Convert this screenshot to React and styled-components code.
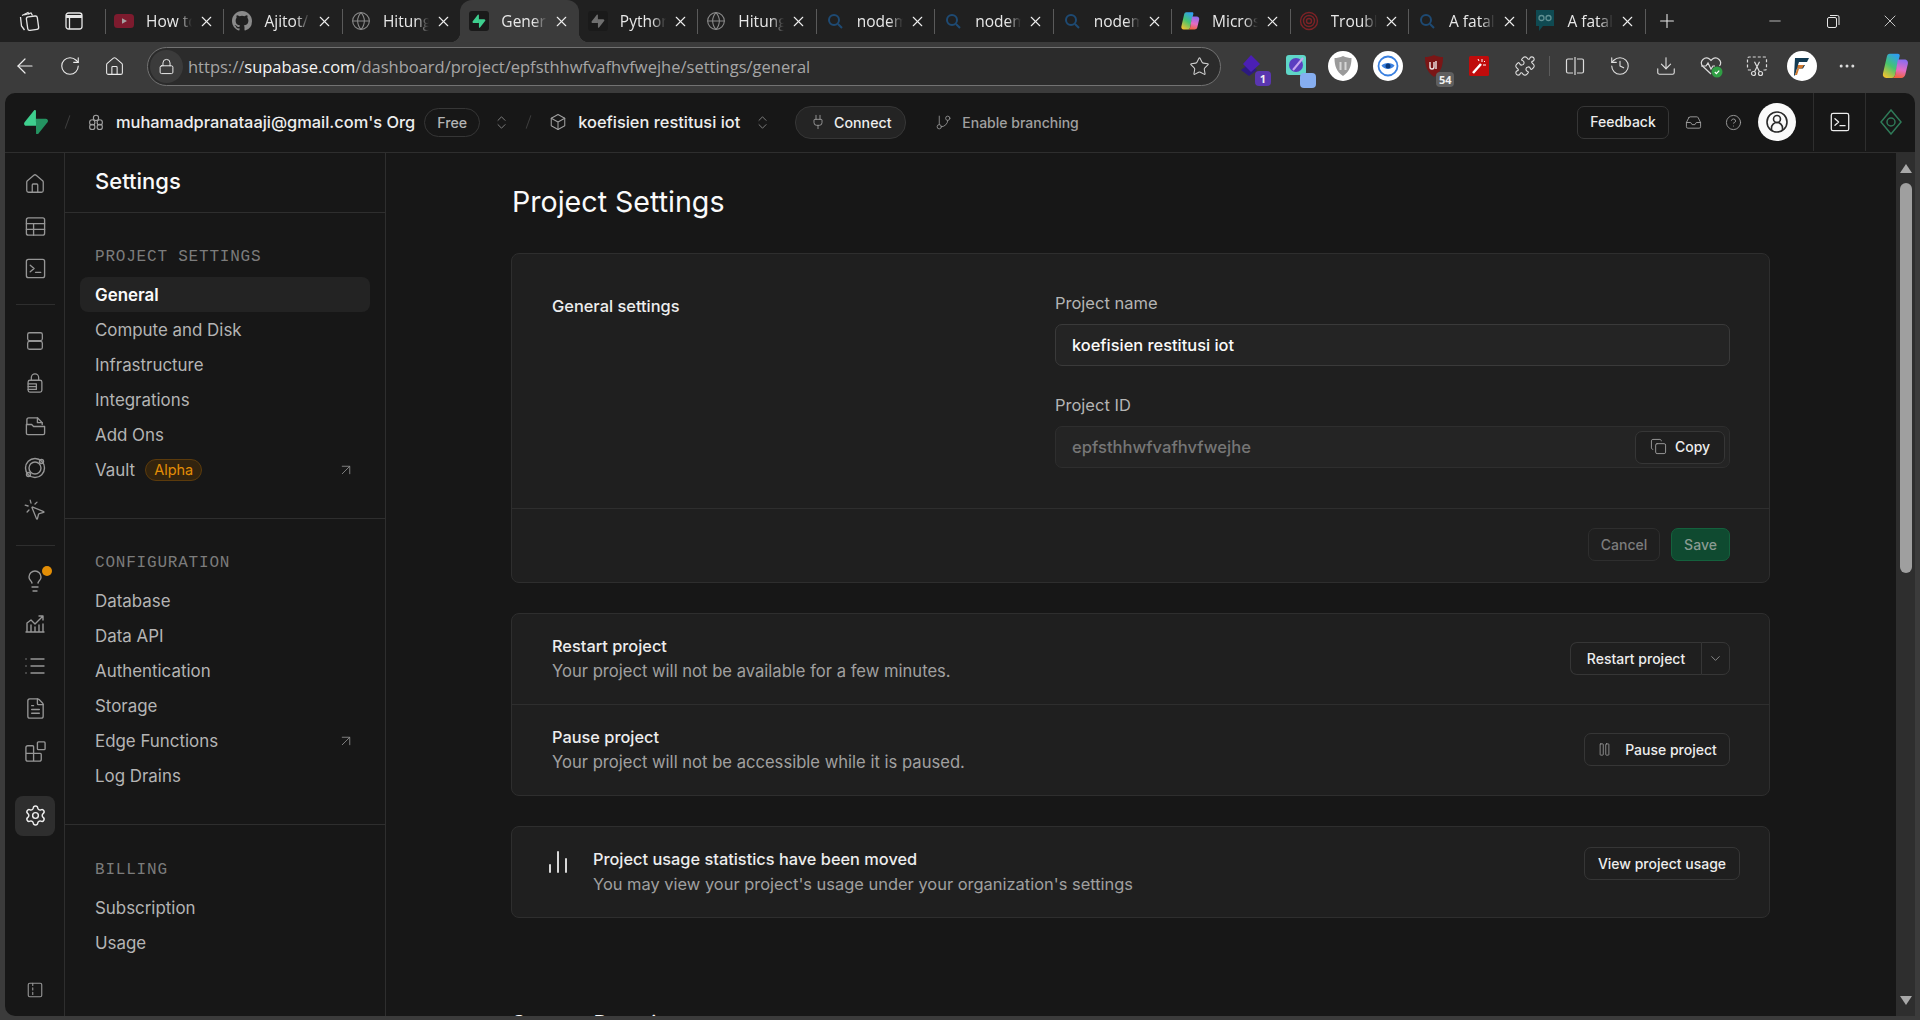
import React from "react";
import styled, { createGlobalStyle } from "styled-components";
import {
    ArrowLeft,
    ArrowUpRight,
    Blocks,
    ChevronDown,
    ChevronsUpDown,
    CircleHelp,
    Copy,
    Download,
    Ellipsis,
    FileText,
    GitBranch,
    Globe,
    History,
    House,
    Inbox,
    Lightbulb,
    List,
    Lock,
    Minus,
    MousePointerClick,
    Pause,
    Plug,
    Plus,
    Puzzle,
    RotateCw,
    Settings as Gear,
    Star,
    X,
} from "lucide-react";

const GlobalStyle = createGlobalStyle`
    html, body {
        margin: 0;
        height: 100%;
        overflow: hidden;
        background: #3b3b3b;
    }
    * {
        box-sizing: border-box;
    }
`;

const Window = styled.div`
    display: flex;
    flex-direction: column;
    width: 1920px;
    height: 1020px;
    background: #3b3b3b;
    font-family: "Inter", "Liberation Sans", sans-serif;
    color: #ededed;
    overflow: hidden;
`;

/* browser tabs */
const TabStrip = styled.div`
    display: flex;
    align-items: stretch;
    height: 42px;
    background: #202020;
    color: #e8e8e8;
    font-family: "Open Sans", "Liberation Sans", sans-serif;
`;

const StripIcon = styled.div`
    display: flex;
    align-items: center;
    justify-content: center;
    width: ${(props) => props.$width || "46px"};
    margin-left: ${(props) => props.$left || "0"};
`;

const Tab = styled.div`
    position: relative;
    display: flex;
    align-items: center;
    flex: 0 0 118.46px;
    padding-left: 9px;
    background: ${(props) => (props.$active ? "#3b3b3b" : "transparent")};
    border-radius: ${(props) => (props.$active ? "12px 12px 0 0" : "0")};

    &:before {
        content: "";
        display: ${(props) => (props.$noSep ? "none" : "block")};
        position: absolute;
        left: 0;
        top: 9px;
        bottom: 8px;
        width: 1px;
        background: #5a5a5a;
    }
`;

const NewTab = styled(Tab)`
    flex-basis: 44px;
    padding-left: 11px;
`;

const TabFlare = styled.span`
    position: absolute;
    bottom: 0;
    width: 10px;
    height: 10px;
    ${(props) => (props.$side === "left" ? "left: -10px;" : "right: -10px;")}
    background: radial-gradient(
        circle at ${(props) => (props.$side === "left" ? "0 0" : "100% 0")},
        transparent 10px,
        #3b3b3b 10.5px
    );
`;

const TabIcon = styled.div`
    display: flex;
    align-items: center;
    justify-content: center;
    flex: 0 0 20px;
    height: 20px;
`;

const TabTitle = styled.span`
    width: 46px;
    margin-left: 12px;
    font-size: 15.5px;
    white-space: nowrap;
    overflow: hidden;
    -webkit-mask-image: linear-gradient(90deg, #000 70%, transparent 100%);
    mask-image: linear-gradient(90deg, #000 70%, transparent 100%);
`;

const TabClose = styled.div`
    display: flex;
    margin-left: 6px;
`;

const WindowControls = styled.div`
    display: flex;
    align-items: center;
    margin-left: auto;
    padding-right: 1px;
`;

const WindowButton = styled.div`
    display: flex;
    align-items: center;
    justify-content: center;
    width: 57.5px;
`;

/* browser toolbar */
const Toolbar = styled.div`
    display: flex;
    align-items: center;
    height: 51px;
    padding-left: 2px;
    padding-bottom: 3px;
`;

const NavButton = styled.div`
    display: flex;
    align-items: center;
    justify-content: center;
    flex: 0 0 45px;
`;

const AddressBar = styled.div`
    display: flex;
    align-items: center;
    flex: 1;
    height: 39px;
    margin-left: 10px;
    margin-right: 9px;
    padding-right: 10px;
    background: #2b2b2b;
    border: 1px solid #727272;
    border-radius: 20px;
`;

const LockBadge = styled.div`
    display: flex;
    align-items: center;
    justify-content: center;
    flex: 0 0 33px;
    height: 33px;
    margin-left: 2px;
    background: #3b3b3b;
    border-radius: 50%;
`;

const Url = styled.div`
    flex: 1;
    margin-left: 5px;
    font-family: "Open Sans", "Liberation Sans", sans-serif;
    font-size: 16.5px;
    color: #a6a6a6;
    white-space: nowrap;
    b {
        font-weight: 400;
        color: #f4f4f4;
    }
`;

const ExtSlot = styled.div`
    position: relative;
    display: flex;
    align-items: center;
    justify-content: center;
    flex: 0 0 ${(props) => props.$width || "45.4px"};
`;

const ExtBadge = styled.span`
    position: absolute;
    right: ${(props) => props.$right || "6px"};
    bottom: -9px;
    min-width: 16px;
    height: 15px;
    padding: 0 3px;
    border-radius: 4px;
    background: ${(props) => props.$color};
    color: #f0f0f0;
    font-family: "Open Sans", sans-serif;
    font-size: 11px;
    font-weight: 700;
    line-height: 15px;
    text-align: center;
`;

const ToolbarSep = styled.div`
    flex: 0 0 1px;
    height: 20px;
    margin: 0 2px;
    background: #5c5c5c;
`;

/* supabase app */
const Shell = styled.div`
    display: flex;
    flex-direction: column;
    flex: 1;
    min-height: 0;
    margin: 0 5px 4px 5px;
    background: #171717;
    border-radius: 10px 10px 0 10px;
    overflow: hidden;
`;

const AppHeader = styled.header`
    display: flex;
    align-items: center;
    flex: 0 0 60px;
    padding-bottom: 1px;
    border-bottom: 1px solid #2e2e2e;
    font-size: 16.4px;
`;

const Slash = styled.span`
    width: 1px;
    height: 14px;
    margin-left: ${(props) => props.$left};
    background: #3e3e3e;
    transform: rotate(20deg);
`;

const HeaderIcon = styled.div`
    display: flex;
    align-items: center;
    margin-left: ${(props) => props.$left || "0"};
`;

const Crumb = styled.span`
    margin-left: ${(props) => props.$left || "0"};
    font-weight: 500;
    color: #ededed;
    white-space: nowrap;
`;

const Pill = styled.span`
    display: inline-flex;
    align-items: center;
    justify-content: center;
    gap: ${(props) => props.$gap || "0"};
    width: ${(props) => props.$width};
    height: ${(props) => props.$height || "29px"};
    margin-left: ${(props) => props.$left};
    border: 1px solid #363636;
    border-radius: 16px;
    background: ${(props) => props.$bg || "transparent"};
    color: ${(props) => props.$color || "#b4b4b4"};
    font-size: 14.2px;
    font-weight: 500;
`;

const Muted = styled.span`
    margin-left: 10px;
    color: #a0a0a0;
    font-size: 14px;
    font-weight: 500;
`;

const HeaderRight = styled.div`
    display: flex;
    align-items: center;
    height: 100%;
    margin-left: auto;
`;

const Button = styled.button`
    display: inline-flex;
    align-items: center;
    justify-content: center;
    gap: ${(props) => props.$gap || "0"};
    width: ${(props) => props.$width};
    height: 33px;
    padding: 0 0 1px;
    background: ${(props) => props.$bg || "#1f1f1f"};
    border: 1px solid ${(props) => props.$border || "#363636"};
    border-radius: 7px;
    color: ${(props) => props.$color || "#ededed"};
    font-family: inherit;
    font-size: 14px;
    font-weight: 500;
    white-space: nowrap;
`;

const Avatar = styled.div`
    display: flex;
    align-items: center;
    justify-content: center;
    width: 38px;
    height: 38px;
    margin-left: 16px;
    border-radius: 50%;
    background: #fafafa;
`;

const HeaderCell = styled.div`
    display: flex;
    align-items: center;
    justify-content: center;
    width: ${(props) => props.$width};
    height: 100%;
    margin-left: ${(props) => props.$left || "0"};
    border-left: 1px solid #2e2e2e;
`;

const Body = styled.div`
    display: flex;
    flex: 1;
    min-height: 0;
`;

const Rail = styled.nav`
    display: flex;
    flex-direction: column;
    align-items: center;
    flex: 0 0 60px;
    padding: 10px 0 5px 1px;
    border-right: 1px solid #2e2e2e;
`;

const RailItem = styled.div`
    position: relative;
    display: flex;
    align-items: center;
    justify-content: center;
    flex: 0 0 ${(props) => props.$height || "42.3px"};
`;

const RailActive = styled.div`
    display: flex;
    align-items: center;
    justify-content: center;
    width: 40px;
    height: 40px;
    margin-top: 23px;
    border-radius: 8px;
    background: #2e2e2e;
`;

const RailDivider = styled.div`
    flex: 0 0 1px;
    width: 39px;
    margin: ${(props) => props.$margin};
    background: #2e2e2e;
`;

const Dot = styled.span`
    position: absolute;
    top: 7px;
    left: 19px;
    width: 10px;
    height: 10px;
    border-radius: 50%;
    background: #e38e06;
`;

const RailFoot = styled.div`
    display: flex;
    align-items: center;
    justify-content: center;
    margin-top: auto;
    height: 42px;
`;

const Panel = styled.aside`
    flex: 0 0 321px;
    border-right: 1px solid #2e2e2e;
`;

const PanelTitle = styled.div`
    display: flex;
    align-items: center;
    height: 60px;
    padding-left: 30px;
    padding-bottom: 3px;
    border-bottom: 1px solid #2e2e2e;
    font-size: 22px;
    font-weight: 500;
    color: #fafafa;
`;

const PanelSection = styled.section`
    padding: ${(props) => (props.$last ? "33px" : "32px")} 15px 31px;
    border-bottom: ${(props) => (props.$last ? "none" : "1px solid #2e2e2e")};
`;

const SectionLabel = styled.div`
    height: 24px;
    margin-bottom: 8px;
    padding-left: 15px;
    font-family: "Liberation Mono", "DejaVu Sans Mono", monospace;
    font-size: 16px;
    letter-spacing: 0.8px;
    line-height: 24px;
    color: #7c7c7c;
`;

const PanelItem = styled.div`
    display: flex;
    align-items: center;
    height: 35px;
    padding: 0 15px;
    border-radius: 8px;
    background: ${(props) => (props.$active ? "#232323" : "transparent")};
    color: ${(props) => (props.$active ? "#fafafa" : "#b4b4b4")};
    font-size: 16.9px;
    font-weight: ${(props) => (props.$active ? 600 : 400)};
`;

const AlphaTag = styled.span`
    display: inline-block;
    height: 22px;
    margin-left: 10px;
    padding: 0 8px;
    border: 1px solid #5c3b0c;
    border-radius: 11px;
    background: #33240e;
    color: #e38e06;
    font-size: 14.5px;
    line-height: 20px;
`;

const External = styled.span`
    display: flex;
    margin-left: auto;
    color: #8a8a8a;
`;

const Main = styled.main`
    flex: 1;
    min-width: 0;
    height: 863px;
    overflow: hidden;
    padding: 29px 0 0 125px;
`;

const PageTitle = styled.h1`
    height: 40px;
    margin: 0 0 31px 1px;
    font-size: 28.6px;
    font-weight: 400;
    line-height: 40px;
    color: #fafafa;
`;

const Card = styled.div`
    width: 1259px;
    margin-bottom: ${(props) => props.$bottom || "30px"};
    background: #1f1f1f;
    border: 1px solid #2e2e2e;
    border-radius: 8px;
`;

const FormGrid = styled.div`
    display: grid;
    grid-template-columns: 503px 675px;
    padding: 37px 40px 40px;
    border-bottom: 1px solid #2e2e2e;
`;

const CardHeading = styled.div`
    margin-top: 3px;
    font-size: 16.4px;
    line-height: 24px;
    font-weight: 500;
    color: #ededed;
`;

const FieldLabel = styled.label`
    display: block;
    height: 24px;
    margin-top: ${(props) => props.$top || "0"};
    margin-bottom: 9px;
    color: #b4b4b4;
    font-size: 16.5px;
    line-height: 24px;
`;

const Field = styled.div`
    display: flex;
    align-items: center;
    height: 42px;
    padding: 0 4px 0 16px;
    background: #242424;
    border: 1px solid ${(props) => (props.$readOnly ? "#2e2e2e" : "#3a3a3a")};
    border-radius: 7px;
    color: ${(props) => (props.$readOnly ? "#767676" : "#fafafa")};
    font-size: ${(props) => (props.$readOnly ? "16.6px" : "16.4px")};
    font-weight: 500;
`;

const FieldValue = styled.span`
    flex: 1;
    margin-bottom: 1px;
`;

const CardFooter = styled.div`
    display: flex;
    justify-content: flex-end;
    gap: 11px;
    padding: 19px 39px 21px;
`;

const Row = styled.div`
    display: flex;
    align-items: center;
    justify-content: space-between;
    height: ${(props) => props.$height || "91px"};
    padding: 0 39px 0 40px;
    border-bottom: ${(props) => (props.$last ? "none" : "1px solid #2e2e2e")};
`;

const RowTitle = styled.div`
    font-size: 16.35px;
    line-height: 25px;
    font-weight: 500;
    color: #ededed;
`;

const RowDesc = styled.div`
    font-size: 16.6px;
    line-height: 25px;
    color: #a0a0a0;
`;

const NoticeDesc = styled(RowDesc)`
    font-size: 16.45px;
`;

const RowAction = styled.div`
    display: flex;
    margin-bottom: 1px;
`;

const SplitMain = styled(Button)`
    border-radius: 7px 0 0 7px;
    border-right: none;
`;

const SplitArrow = styled(Button)`
    border-radius: 0 7px 7px 0;
`;

const NoticeRow = styled.div`
    display: flex;
    align-items: flex-start;
    padding: 20px 29px 20px 36px;
    height: 90px;
`;

const NoticeIcon = styled.div`
    display: flex;
    flex: 0 0 45px;
    margin-top: 4px;
`;

const NoticeText = styled.div`
    flex: 1;
`;

const NextHeading = styled.h2`
    margin: 93px 0 0;
    font-size: 21px;
    font-weight: 400;
    color: #fafafa;
`;

const ScrollTrack = styled.div`
    display: flex;
    flex-direction: column;
    align-items: center;
    flex: 0 0 19px;
    height: 863px;
    background: #2e2e2e;
`;

const ScrollUp = styled.div`
    width: 0;
    height: 0;
    margin-top: 11px;
    border-left: 6px solid transparent;
    border-right: 6px solid transparent;
    border-bottom: 9px solid #a8a8a8;
`;

const ScrollThumb = styled.div`
    width: 12px;
    height: 390px;
    margin-top: 10px;
    border-radius: 6px;
    background: #9f9f9f;
`;

const ScrollDown = styled.div`
    width: 0;
    height: 0;
    margin-top: auto;
    margin-bottom: 11px;
    border-left: 6px solid transparent;
    border-right: 6px solid transparent;
    border-top: 9px solid #a8a8a8;
`;

const Bolt = ({ size = 24, color }) => (
    <svg width={size} height={size * 1.03} viewBox="0 0 109 113" fill="none">
        <path
            d="M63.7 110.3c-2.9 3.6-8.7 1.6-8.8-3L54 40.2h45.3c8.2 0 12.8 9.5 7.7 15.9L63.7 110.3z"
            fill={color || "#249361"}
        />
        <path
            d="M45.3 2.1c2.9-3.6 8.7-1.6 8.8 3l.4 67.1H9.8c-8.2 0-12.8-9.5-7.7-15.9L45.3 2.1z"
            fill={color || "#3ecf8e"}
        />
    </svg>
);

const TabBolt = ({ color }) => (
    <svg width="20" height="20" viewBox="0 0 20 20">
        <rect width="20" height="20" rx="3" fill="#1a1a1a" />
        <g transform="translate(3.5 3.5) scale(0.118)">
            <path d="M63.7 110.3c-2.9 3.6-8.7 1.6-8.8-3L54 40.2h45.3c8.2 0 12.8 9.5 7.7 15.9L63.7 110.3z" fill={color} />
            <path d="M45.3 2.1c2.9-3.6 8.7-1.6 8.8 3l.4 67.1H9.8c-8.2 0-12.8-9.5-7.7-15.9L45.3 2.1z" fill={color} />
        </g>
    </svg>
);

const YouTubeFav = () => (
    <svg width="20" height="14" viewBox="0 0 20 14">
        <rect width="20" height="14" rx="3.5" fill="#7d1b2e" />
        <path d="M8 4.3 13 7l-5 2.7z" fill="#a6a0a0" />
    </svg>
);

const GithubFav = () => (
    <svg width="20" height="20" viewBox="0 0 16 16" fill="#8a8a8a">
        <path d="M8 0C3.58 0 0 3.58 0 8c0 3.54 2.29 6.53 5.47 7.59.4.07.55-.17.55-.38v-1.34c-2.23.48-2.7-1.07-2.7-1.07-.36-.92-.89-1.17-.89-1.17-.73-.5.05-.49.05-.49.8.06 1.23.83 1.23.83.71 1.22 1.87.87 2.33.66.07-.52.28-.87.5-1.07-1.77-.2-3.64-.89-3.64-3.95 0-.87.31-1.59.82-2.15-.08-.2-.36-1.02.08-2.12 0 0 .67-.21 2.2.82a7.6 7.6 0 0 1 4 0c1.53-1.04 2.2-.82 2.2-.82.44 1.1.16 1.92.08 2.12.51.56.82 1.27.82 2.15 0 3.07-1.87 3.75-3.65 3.95.29.25.54.73.54 1.48v2.2c0 .21.15.46.55.38A8 8 0 0 0 16 8c0-4.42-3.58-8-8-8z" />
    </svg>
);

const SearchFav = () => (
    <svg width="18" height="18" viewBox="0 0 18 18" fill="none" stroke="#1e4a73" strokeWidth="2">
        <circle cx="8" cy="8" r="5" />
        <path d="m12 12 4 4" />
    </svg>
);

const CopilotFav = ({ size = 20, id = "cp" }) => (
    <svg width={size} height={size} viewBox="0 0 24 24">
        <defs>
            <linearGradient id={`${id}A`} x1="0.7" y1="0" x2="0.2" y2="1">
                <stop offset="0" stopColor="#2f9ff0" />
                <stop offset="0.5" stopColor="#46c46e" />
                <stop offset="1" stopColor="#f2c230" />
            </linearGradient>
            <linearGradient id={`${id}B`} x1="0.6" y1="0" x2="0.4" y2="1">
                <stop offset="0" stopColor="#8a6cf0" />
                <stop offset="0.55" stopColor="#e46cc4" />
                <stop offset="1" stopColor="#f0643c" />
            </linearGradient>
        </defs>
        <path d="M7.5 1.5h7c1.2 0 1.8.8 1.5 2L12 20c-.4 1.4-1.2 2.2-2.5 2.2H4.5c-2.2 0-3.3-1.8-2.8-3.8L5 4c.3-1.5 1.2-2.5 2.5-2.5z" fill={`url(#${id}A)`} />
        <path d="M14.5 6.5H20c2.2 0 3.6 1.7 3 3.8l-2.2 9.2c-.5 1.7-1.7 2.7-3.3 2.7h-8c1.3 0 2.2-.9 2.6-2.2z" fill={`url(#${id}B)`} />
    </svg>
);

const FingerprintFav = () => (
    <svg width="20" height="20" viewBox="0 0 20 20" fill="none" stroke="#7c2226" strokeWidth="1.4">
        <circle cx="10" cy="10" r="8.5" />
        <circle cx="10" cy="10" r="5.5" />
        <circle cx="10" cy="10" r="2.5" />
    </svg>
);

const CollabFav = () => (
    <svg width="20" height="22" viewBox="0 0 20 22">
        <path d="M1 0h18v16H8l-4 5v-5H1z" fill="#0f4a52" />
        <path d="M4 8a2.5 2.5 0 0 1 5 0 2.5 2.5 0 0 1-5 0m7 0a2.5 2.5 0 0 1 5 0 2.5 2.5 0 0 1-5 0" fill="none" stroke="#5f8f92" strokeWidth="1.3" />
    </svg>
);

const TabsIcon = () => (
    <svg width="22" height="22" viewBox="0 0 22 22" fill="none" stroke="#e6e6e6" strokeWidth="1.3">
        <path d="M3 5.5 9 2.5l1.2 2M1.5 7l1 9 3 4" />
        <path d="M5.2 5 12 3l1.5 2.5" />
        <rect x="8" y="6.5" width="11" height="13.5" rx="2" transform="rotate(-8 13 13)" />
    </svg>
);

const VerticalTabsIcon = () => (
    <svg width="18" height="18" viewBox="0 0 18 18" fill="none" stroke="#e6e6e6" strokeWidth="1.3">
        <rect x="1" y="1" width="16" height="16" rx="2.5" />
        <path d="M1 4.5h16" strokeWidth="3" />
        <path d="M4.5 5v12" />
    </svg>
);

const RestoreIcon = () => (
    <svg width="14" height="14" viewBox="0 0 14 14" fill="none" stroke="#e6e6e6" strokeWidth="1">
        <rect x="1.5" y="3.5" width="9" height="10" rx="1.5" />
        <path d="M4 1.5h7.5a1.5 1.5 0 0 1 1.5 1.5v8" />
    </svg>
);

const SplitIcon = () => (
    <svg width="20" height="20" viewBox="0 0 20 20" fill="none" stroke="#dcdcdc" strokeWidth="1.2">
        <path d="M8 3H3a1.5 1.5 0 0 0-1.5 1.5v11A1.5 1.5 0 0 0 3 17h5M12 3h5a1.5 1.5 0 0 1 1.5 1.5v11A1.5 1.5 0 0 1 17 17h-5M10 1v18" />
    </svg>
);

const HeartCheck = () => (
    <svg width="24" height="24" viewBox="0 0 24 24">
        <path d="M12 20 3.5 12a5 5 0 0 1 7-7L12 6.5 13.5 5a5 5 0 0 1 7 7" fill="none" stroke="#dcdcdc" strokeWidth="1.2" />
        <path d="M2 12h5l2-3 3 6 2-3h2" fill="none" stroke="#dcdcdc" strokeWidth="1.2" />
        <circle cx="18" cy="18" r="5.5" fill="#2f9e44" />
        <path d="m15.8 18 1.6 1.6 2.8-3" fill="none" stroke="#fff" strokeWidth="1.2" />
    </svg>
);

const Scissors = () => (
    <svg width="22" height="22" viewBox="0 0 22 22" fill="none" stroke="#dcdcdc" strokeWidth="1.2">
        <path d="M5 15H3a1.5 1.5 0 0 1-1.5-1.5v-10A1.5 1.5 0 0 1 3 2h16a1.5 1.5 0 0 1 1.5 1.5v10A1.5 1.5 0 0 1 19 15h-2" strokeDasharray="3 2" />
        <circle cx="7.5" cy="18.5" r="2" />
        <circle cx="14.5" cy="18.5" r="2" />
        <path d="m8.5 16.8 5-10M13.5 16.8l-5-10" />
    </svg>
);

const StackExt = () => (
    <svg width="22" height="22" viewBox="0 0 22 22">
        <path d="M0 15 8 9l8 6-8 6z" fill="#2c1a80" />
        <path d="M2 9 10 0l9 9-9 8z" fill="#4b1fb4" />
    </svg>
);

const PaletteExt = () => (
    <svg width="26" height="26" viewBox="0 0 26 26">
        <rect x="1" y="2" width="20" height="20" rx="3" fill="#5fd6c8" />
        <circle cx="11" cy="12" r="7" fill="#5a3fc0" />
        <path d="m8 17 10-12" stroke="#c8a6f0" strokeWidth="2" />
    </svg>
);

const PauseShield = () => (
    <svg width="30" height="30" viewBox="0 0 30 30">
        <circle cx="15" cy="15" r="15" fill="#fff" />
        <path d="M15 5c3 1.5 6 2 8.5 2 0 8-2 13.5-8.5 18C8.5 20.5 6.5 15 6.5 7 9 7 12 6.5 15 5z" fill="#9a9a9a" />
        <path d="M12.5 11v8M17.5 11v8" stroke="#d6d6d6" strokeWidth="2" />
    </svg>
);

const EyeExt = () => (
    <svg width="30" height="30" viewBox="0 0 30 30">
        <circle cx="15" cy="15" r="15" fill="#fff" />
        <circle cx="15" cy="15" r="9.5" fill="#fff" stroke="#3a80e0" strokeWidth="1.8" />
        <path d="M8.5 14.5C11 11 19 11 21.5 14.5 19 19 11 19 8.5 14.5z" fill="#3a80e0" />
        <circle cx="15" cy="15" r="2.5" fill="#0c3a7c" />
    </svg>
);

const UblockExt = () => (
    <svg width="22" height="24" viewBox="0 0 22 24">
        <path d="M11 1c3 1.5 6 2 9 2 0 9-2 15-9 20C4 18 2 12 2 3c3 0 6-.5 9-2z" fill="#7a1616" />
        <path d="M7 8v5a2 2 0 0 0 4 0V8M13 7v8" fill="none" stroke="#efe6e6" strokeWidth="1.4" />
    </svg>
);

const WandExt = () => (
    <svg width="20" height="20" viewBox="0 0 20 20">
        <rect width="20" height="20" rx="1.5" fill="#c00b0b" />
        <path d="m4 17 8-9" stroke="#fff" strokeWidth="2.5" />
        <path d="M13 3v3M16 5l-1 1M17 9h-3M9 3l1 2" stroke="#fff" strokeWidth="1" />
    </svg>
);

const FExt = () => (
    <svg width="30" height="30" viewBox="0 0 30 30">
        <circle cx="15" cy="15" r="15" fill="#fff" />
        <path d="M8 7h14l-2 4h-8l-1 3h7l-2 3.5h-6l-2 7H7z" fill="#123a52" />
        <path d="M11 14h6l-2 3.5h-5zM8 24l2-6h2l-2 6z" fill="#d0782e" />
    </svg>
);

const Ico = ({ children, size = 22, color = "#969696", width = 1.4, viewBox = "0 0 24 24" }) => (
    <svg width={size} height={size} viewBox={viewBox} fill="none" stroke={color} strokeWidth={width} strokeLinecap="round" strokeLinejoin="round">
        {children}
    </svg>
);

const TableIcon = () => (
    <Ico size={23}>
        <rect x="2.5" y="3" width="19" height="18" rx="2" />
        <path d="M2.5 9h19M2.5 15h19M10 9v12" />
    </Ico>
);

const TerminalIcon = ({ color, size = 23 }) => (
    <Ico size={size} color={color}>
        <rect x="2.5" y="2.5" width="19" height="19" rx="2" />
        <path d="m6.5 8.5 4 3.5-4 3.5M12 16h5.5" />
    </Ico>
);

const DbIcon = () => (
    <Ico>
        <rect x="4" y="3" width="16" height="8.5" rx="2" />
        <rect x="4" y="12.5" width="16" height="8.5" rx="2" />
    </Ico>
);

const AuthIcon = () => (
    <Ico>
        <path d="M8 9V6a4 4 0 0 1 8 0v3" />
        <rect x="4.5" y="9" width="15" height="13" rx="2" />
        <path d="M4.5 13h9M4.5 16h9M4.5 19h9M13.5 13v6" />
    </Ico>
);

const FolderIcon = () => (
    <Ico size={23}>
        <path d="M3 11V6a2 2 0 0 1 2-2h9l5 5v2" />
        <path d="M14 4v5h5" />
        <path d="M2.5 11H8l2 2h11.5v7a1.5 1.5 0 0 1-1.5 1.5H4A1.5 1.5 0 0 1 2.5 20z" />
    </Ico>
);

const RealtimeIcon = () => (
    <Ico size={24}>
        <circle cx="12" cy="12" r="9.5" />
        <circle cx="12" cy="12" r="6" />
        <circle cx="18.5" cy="5.5" r="2" />
        <circle cx="5.5" cy="18.5" r="2" />
    </Ico>
);

const ReportsIcon = () => (
    <Ico size={24}>
        <path d="M3 21h18M4 21v-9l4-3 4 4 8-8M20 5h-4M20 5v4M8 21v-7M12 21v-5M16 21v-7M20 21v-8" />
    </Ico>
);

const CollapseIcon = () => (
    <Ico size={18} width={1.5}>
        <rect x="3" y="3" width="18" height="18" rx="2" />
        <path d="M9 3v18" strokeDasharray="3 3" />
    </Ico>
);

const OrgIcon = () => (
    <Ico size={18} color="#a0a0a0" width={1.5}>
        <circle cx="12" cy="6.5" r="3.5" />
        <circle cx="7" cy="12.5" r="3.5" />
        <circle cx="17" cy="12.5" r="3.5" />
        <circle cx="7" cy="18.5" r="3.5" />
        <circle cx="17" cy="18.5" r="3.5" />
    </Ico>
);

const BoxIcon = () => (
    <Ico size={18} color="#a0a0a0">
        <path d="M12 2 3 7v10l9 5 9-5V7z" />
        <path d="m3 7 9 5 9-5M12 12v10" />
    </Ico>
);

const AvatarIcon = () => (
    <svg width="24" height="24" viewBox="0 0 24 24" fill="none" stroke="#2a2a2a" strokeWidth="1.6">
        <circle cx="12" cy="12" r="10" />
        <circle cx="12" cy="9" r="3.5" />
        <path d="M6.5 20v-2a5.5 5.5 0 0 1 11 0v2" />
    </svg>
);

const DiamondIcon = () => (
    <svg width="22" height="26" viewBox="0 0 22 26" fill="none" stroke="#2f7a58" strokeWidth="1.5">
        <path d="M11 1 21 13 11 25 1 13z" />
        <circle cx="11" cy="13" r="4" />
    </svg>
);

const BarsIcon = () => (
    <svg width="20" height="22" viewBox="0 0 20 22" stroke="#d8d8d8" strokeWidth="2" strokeLinecap="round">
        <path d="M2 14v7M10 1v20M18 8v13" />
    </svg>
);

const tabs = [
    { title: "How to", icon: <YouTubeFav /> },
    { title: "Ajitot/", icon: <GithubFav /> },
    { title: "Hitung", icon: <Globe size={20} color="#8a8a8a" strokeWidth={1.3} /> },
    { title: "General", icon: <TabBolt color="#3ecf8e" />, active: true, noSep: true },
    { title: "Python", icon: <TabBolt color="#6f6f6f" />, noSep: true },
    { title: "Hitung", icon: <Globe size={20} color="#8a8a8a" strokeWidth={1.3} /> },
    { title: "nodem", icon: <SearchFav /> },
    { title: "nodem", icon: <SearchFav /> },
    { title: "nodem", icon: <SearchFav /> },
    { title: "Micros", icon: <CopilotFav id="tabCp" /> },
    { title: "Troubl", icon: <FingerprintFav /> },
    { title: "A fatal", icon: <SearchFav /> },
    { title: "A fatal", icon: <CollabFav /> },
];

const projectItems = ["General", "Compute and Disk", "Infrastructure", "Integrations", "Add Ons"];
const configItems = ["Database", "Data API", "Authentication", "Storage"];

const ExternalArrow = () => (
    <External>
        <ArrowUpRight size={18} strokeWidth={1.2} />
    </External>
);

export default function App() {
    return (
        <Window>
            <GlobalStyle />
            <TabStrip>
                <StripIcon $width="44px" $left="8px">
                    <TabsIcon />
                </StripIcon>
                <StripIcon $width="44px">
                    <VerticalTabsIcon />
                </StripIcon>
                <StripIcon $width="9px" />
                {tabs.map((tab, i) => (
                    <Tab key={i} $active={tab.active} $noSep={tab.noSep}>
                        {tab.active && <TabFlare $side="left" />}
                        {tab.active && <TabFlare $side="right" />}
                        <TabIcon>{tab.icon}</TabIcon>
                        <TabTitle>{tab.title}</TabTitle>
                        <TabClose>
                            <X size={17} strokeWidth={1.6} color="#eeeeee" />
                        </TabClose>
                    </Tab>
                ))}
                <NewTab>
                    <Plus size={22} strokeWidth={1.2} color="#e6e6e6" />
                </NewTab>
                <WindowControls>
                    <WindowButton>
                        <Minus size={18} strokeWidth={1} color="#e6e6e6" />
                    </WindowButton>
                    <WindowButton>
                        <RestoreIcon />
                    </WindowButton>
                    <WindowButton>
                        <X size={20} strokeWidth={1} color="#e6e6e6" />
                    </WindowButton>
                </WindowControls>
            </TabStrip>

            <Toolbar>
                <NavButton>
                    <ArrowLeft size={24} strokeWidth={1.2} color="#ececec" />
                </NavButton>
                <NavButton>
                    <RotateCw size={22} strokeWidth={1.2} color="#ececec" />
                </NavButton>
                <NavButton>
                    <House size={21} strokeWidth={1.2} color="#ececec" />
                </NavButton>
                <AddressBar>
                    <LockBadge>
                        <Lock size={17} strokeWidth={1.4} color="#ececec" />
                    </LockBadge>
                    <Url>
                        https://<b>supabase.com</b>/dashboard/project/epfsthhwfvafhvfwejhe/settings/general
                    </Url>
                    <Star size={21} strokeWidth={1.2} color="#cfcfcf" />
                </AddressBar>
                <ExtSlot>
                    <StackExt />
                    <ExtBadge $color="#5a36b0" $right="4px">
                        1
                    </ExtBadge>
                </ExtSlot>
                <ExtSlot>
                    <PaletteExt />
                    <ExtBadge $color="#86aef0" $right="4px" />
                </ExtSlot>
                <ExtSlot>
                    <PauseShield />
                </ExtSlot>
                <ExtSlot>
                    <EyeExt />
                </ExtSlot>
                <ExtSlot>
                    <UblockExt />
                    <ExtBadge $color="#5f5f5f" $right="2px">
                        54
                    </ExtBadge>
                </ExtSlot>
                <ExtSlot>
                    <WandExt />
                </ExtSlot>
                <ExtSlot>
                    <Puzzle size={22} strokeWidth={1.2} color="#e0e0e0" />
                </ExtSlot>
                <ToolbarSep />
                <ExtSlot>
                    <SplitIcon />
                </ExtSlot>
                <ExtSlot>
                    <History size={22} strokeWidth={1.2} color="#e0e0e0" />
                </ExtSlot>
                <ExtSlot>
                    <Download size={22} strokeWidth={1.2} color="#e0e0e0" />
                </ExtSlot>
                <ExtSlot>
                    <HeartCheck />
                </ExtSlot>
                <ExtSlot>
                    <Scissors />
                </ExtSlot>
                <ExtSlot>
                    <FExt />
                </ExtSlot>
                <ExtSlot>
                    <Ellipsis size={20} strokeWidth={1.6} color="#e0e0e0" />
                </ExtSlot>
                <ExtSlot $width="50px">
                    <CopilotFav size={28} id="barCp" />
                </ExtSlot>
            </Toolbar>

            <Shell>
                <AppHeader>
                    <HeaderIcon $left="19px">
                        <Bolt size={24} />
                    </HeaderIcon>
                    <Slash $left="19px" />
                    <HeaderIcon $left="19px">
                        <OrgIcon />
                    </HeaderIcon>
                    <Crumb $left="11px">muhamadpranataaji@gmail.com's Org</Crumb>
                    <Pill $width="56px" $left="9px">
                        Free
                    </Pill>
                    <HeaderIcon $left="13px">
                        <ChevronsUpDown size={17} strokeWidth={1.2} color="#8f8f8f" />
                    </HeaderIcon>
                    <Slash $left="18px" />
                    <HeaderIcon $left="20px">
                        <BoxIcon />
                    </HeaderIcon>
                    <Crumb $left="11px">koefisien restitusi iot</Crumb>
                    <HeaderIcon $left="14px">
                        <ChevronsUpDown size={17} strokeWidth={1.2} color="#8f8f8f" />
                    </HeaderIcon>
                    <Pill $width="111px" $height="33px" $left="24px" $gap="8px" $bg="#242424" $color="#ededed">
                        <Plug size={16} strokeWidth={1.3} color="#a0a0a0" />
                        Connect
                    </Pill>
                    <HeaderIcon $left="29px">
                        <GitBranch size={17} strokeWidth={1.3} color="#8f8f8f" />
                    </HeaderIcon>
                    <Muted>Enable branching</Muted>
                    <HeaderRight>
                        <Button $width="92px" $bg="#171717">
                            Feedback
                        </Button>
                        <HeaderIcon $left="16px">
                            <Inbox size={17} strokeWidth={1.3} color="#a0a0a0" />
                        </HeaderIcon>
                        <HeaderIcon $left="23px">
                            <CircleHelp size={17} strokeWidth={1.3} color="#a0a0a0" />
                        </HeaderIcon>
                        <Avatar>
                            <AvatarIcon />
                        </Avatar>
                        <HeaderCell $width="52px" $left="17px">
                            <TerminalIcon color="#ededed" size={22} />
                        </HeaderCell>
                        <HeaderCell $width="50px">
                            <DiamondIcon />
                        </HeaderCell>
                    </HeaderRight>
                </AppHeader>

                <Body>
                    <Rail>
                        <RailItem>
                            <House size={22} strokeWidth={1.4} color="#969696" />
                        </RailItem>
                        <RailItem>
                            <TableIcon />
                        </RailItem>
                        <RailItem>
                            <TerminalIcon />
                        </RailItem>
                        <RailDivider $margin="14px 0 15px" />
                        <RailItem>
                            <DbIcon />
                        </RailItem>
                        <RailItem>
                            <AuthIcon />
                        </RailItem>
                        <RailItem>
                            <FolderIcon />
                        </RailItem>
                        <RailItem>
                            <RealtimeIcon />
                        </RailItem>
                        <RailItem>
                            <MousePointerClick size={24} strokeWidth={1.3} color="#969696" />
                        </RailItem>
                        <RailDivider $margin="14px 0 13px" />
                        <RailItem $height="42.7px">
                            <Lightbulb size={24} strokeWidth={1.4} color="#969696" />
                            <Dot />
                        </RailItem>
                        <RailItem $height="42.7px">
                            <ReportsIcon />
                        </RailItem>
                        <RailItem $height="42.7px">
                            <List size={24} strokeWidth={1.4} color="#969696" />
                        </RailItem>
                        <RailItem $height="42.7px">
                            <FileText size={23} strokeWidth={1.4} color="#969696" />
                        </RailItem>
                        <RailItem $height="42.7px">
                            <Blocks size={23} strokeWidth={1.4} color="#969696" />
                        </RailItem>
                        <RailActive>
                            <Gear size={23} strokeWidth={1.5} color="#ededed" />
                        </RailActive>
                        <RailFoot>
                            <CollapseIcon />
                        </RailFoot>
                    </Rail>

                    <Panel>
                        <PanelTitle>Settings</PanelTitle>
                        <PanelSection>
                            <SectionLabel>PROJECT SETTINGS</SectionLabel>
                            {projectItems.map((item, i) => (
                                <PanelItem key={item} $active={i === 0}>
                                    {item}
                                </PanelItem>
                            ))}
                            <PanelItem>
                                Vault
                                <AlphaTag>Alpha</AlphaTag>
                                <ExternalArrow />
                            </PanelItem>
                        </PanelSection>
                        <PanelSection>
                            <SectionLabel>CONFIGURATION</SectionLabel>
                            {configItems.map((item) => (
                                <PanelItem key={item}>{item}</PanelItem>
                            ))}
                            <PanelItem>
                                Edge Functions
                                <ExternalArrow />
                            </PanelItem>
                            <PanelItem>Log Drains</PanelItem>
                        </PanelSection>
                        <PanelSection $last>
                            <SectionLabel>BILLING</SectionLabel>
                            <PanelItem>Subscription</PanelItem>
                            <PanelItem>Usage</PanelItem>
                        </PanelSection>
                    </Panel>

                    <Main>
                        <PageTitle>Project Settings</PageTitle>
                        <Card>
                            <FormGrid>
                                <CardHeading>General settings</CardHeading>
                                <div>
                                    <FieldLabel>Project name</FieldLabel>
                                    <Field>
                                        <FieldValue>koefisien restitusi iot</FieldValue>
                                    </Field>
                                    <FieldLabel $top="27px">Project ID</FieldLabel>
                                    <Field $readOnly>
                                        <FieldValue>epfsthhwfvafhvfwejhe</FieldValue>
                                        <Button $width="90px" $gap="8px">
                                            <Copy size={17} strokeWidth={1.3} color="#a0a0a0" />
                                            Copy
                                        </Button>
                                    </Field>
                                </div>
                            </FormGrid>
                            <CardFooter>
                                <Button $width="72px" $color="#7c7c7c" $border="#2e2e2e">
                                    Cancel
                                </Button>
                                <Button $width="59px" $bg="#0f4a30" $border="#14613d" $color="#8a9b92">
                                    Save
                                </Button>
                            </CardFooter>
                        </Card>
                        <Card>
                            <Row>
                                <div>
                                    <RowTitle>Restart project</RowTitle>
                                    <RowDesc>Your project will not be available for a few minutes.</RowDesc>
                                </div>
                                <RowAction>
                                    <SplitMain $width="131px">Restart project</SplitMain>
                                    <SplitArrow $width="29px">
                                        <ChevronDown size={15} strokeWidth={1.3} color="#a0a0a0" />
                                    </SplitArrow>
                                </RowAction>
                            </Row>
                            <Row $last $height="90px">
                                <div>
                                    <RowTitle>Pause project</RowTitle>
                                    <RowDesc>Your project will not be accessible while it is paused.</RowDesc>
                                </div>
                                <RowAction>
                                    <Button $width="146px" $gap="13px">
                                        <Pause size={15} strokeWidth={1.3} color="#a0a0a0" />
                                        Pause project
                                    </Button>
                                </RowAction>
                            </Row>
                        </Card>
                        <Card $bottom="0">
                            <NoticeRow>
                                <NoticeIcon>
                                    <BarsIcon />
                                </NoticeIcon>
                                <NoticeText>
                                    <RowTitle>Project usage statistics have been moved</RowTitle>
                                    <NoticeDesc>You may view your project's usage under your organization's settings</NoticeDesc>
                                </NoticeText>
                                <Button $width="156px">View project usage</Button>
                            </NoticeRow>
                        </Card>
                        <NextHeading>Custom Domains</NextHeading>
                    </Main>
                    <ScrollTrack>
                        <ScrollUp />
                        <ScrollThumb />
                        <ScrollDown />
                    </ScrollTrack>
                </Body>
            </Shell>
        </Window>
    );
}
